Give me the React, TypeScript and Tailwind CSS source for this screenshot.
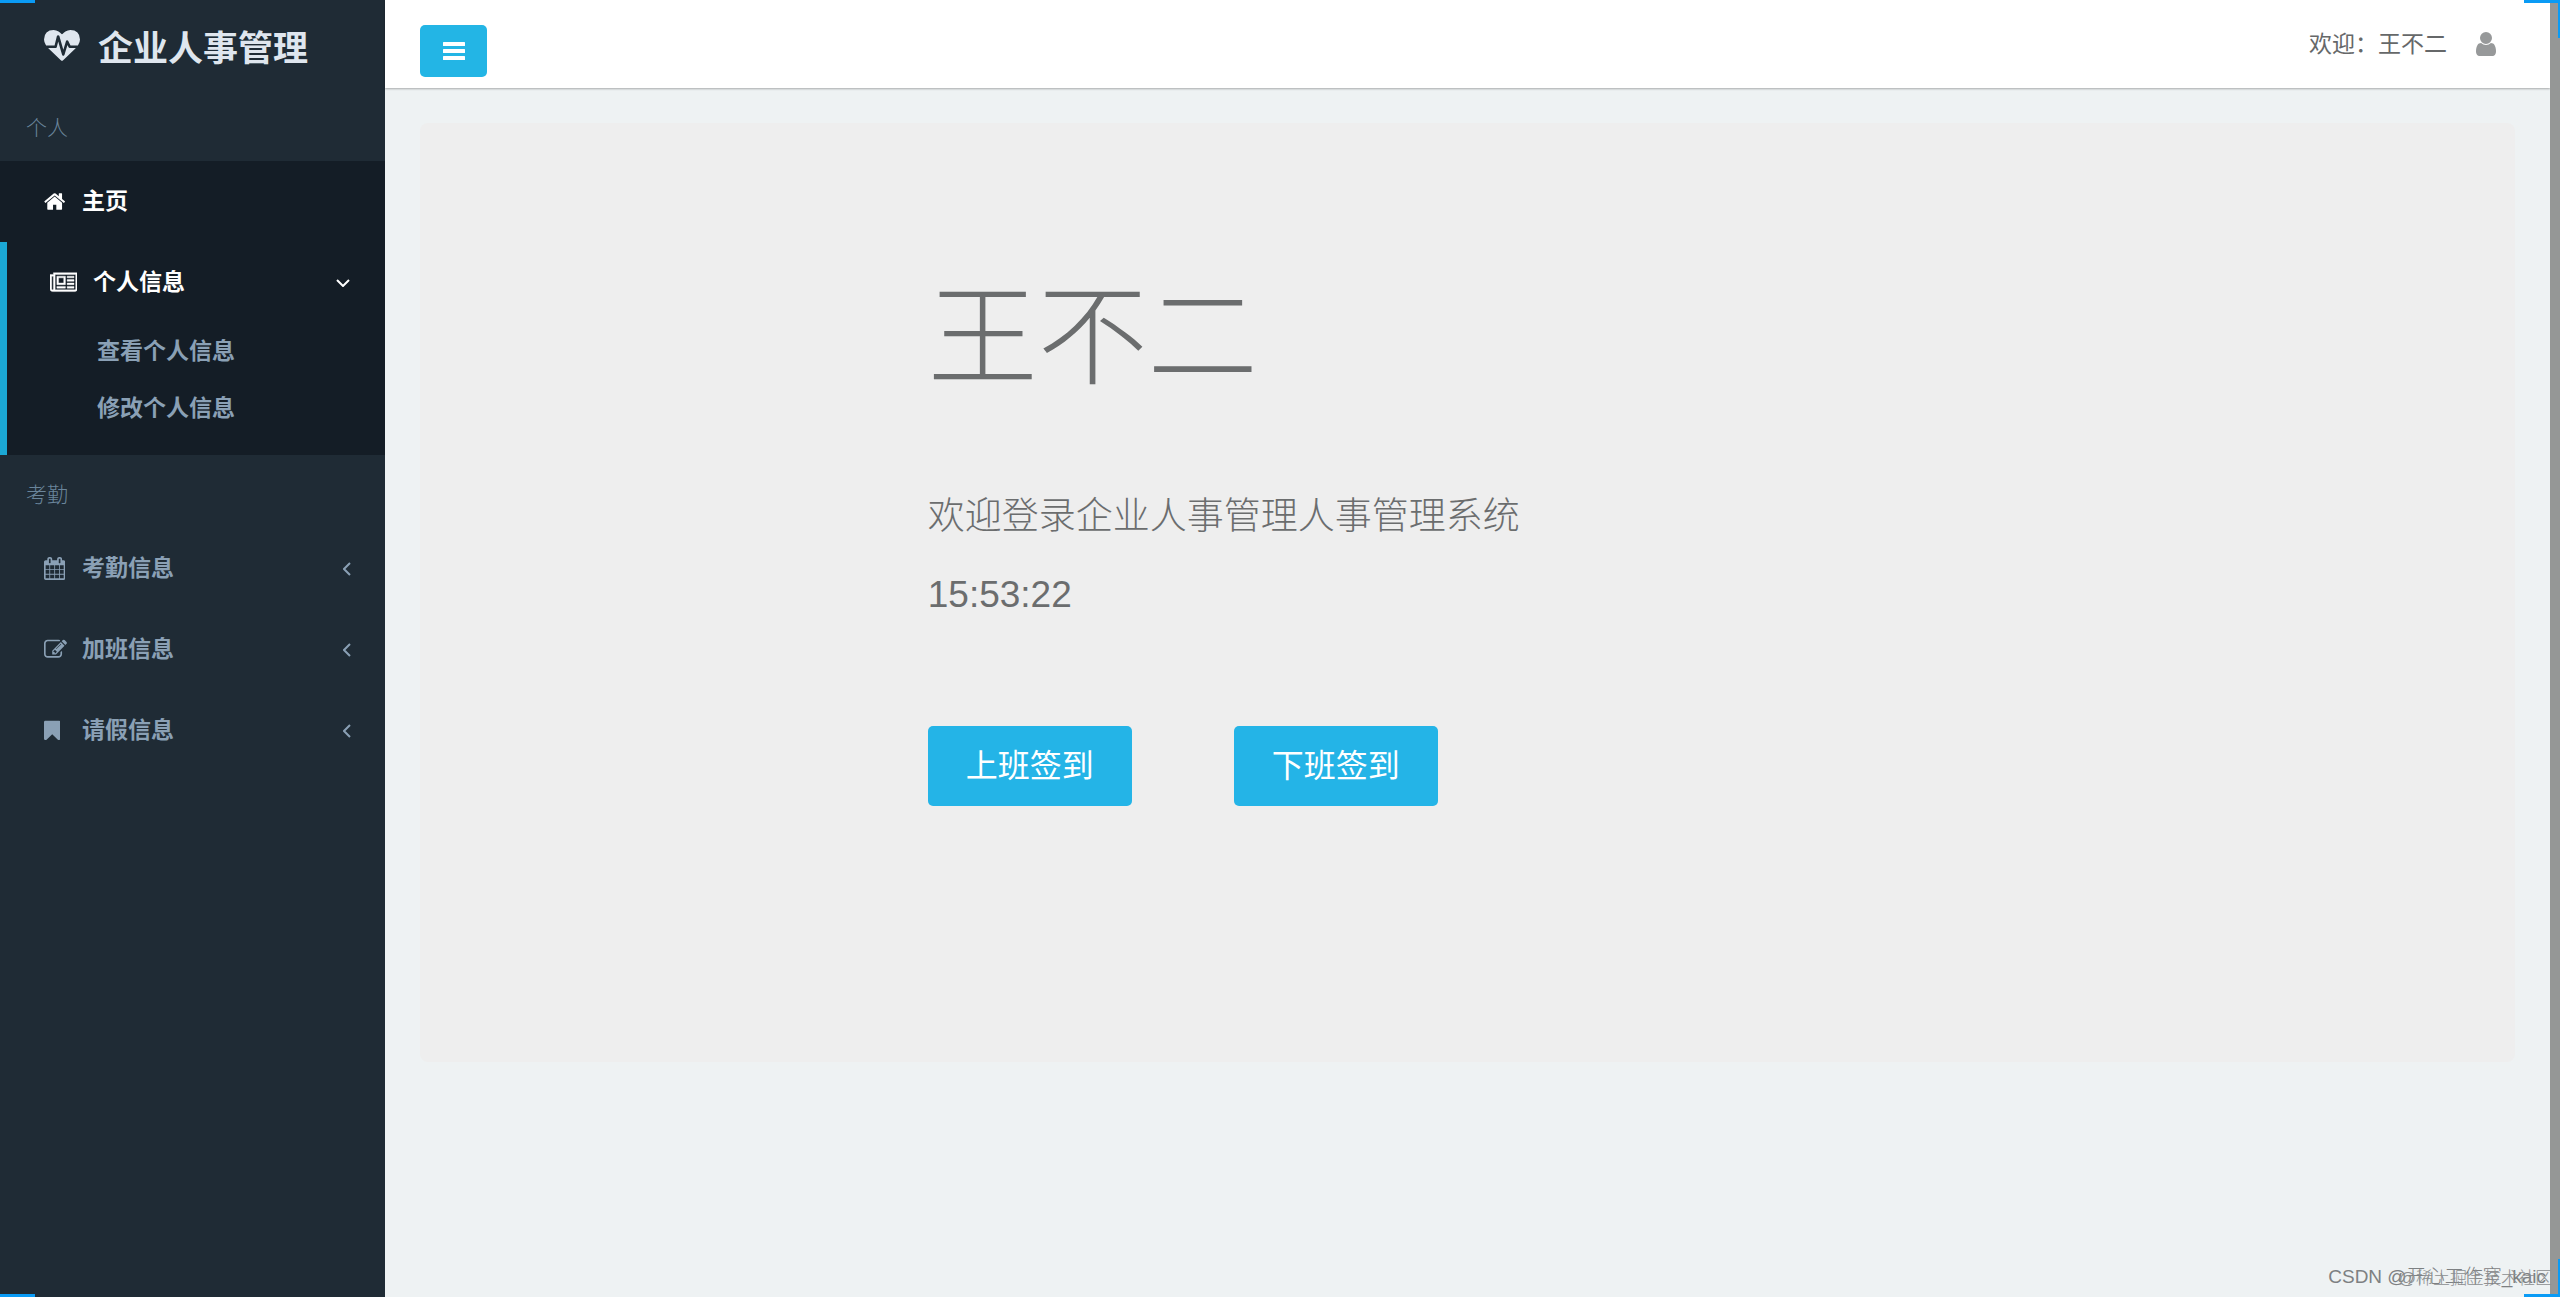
import React from "react";

type IconProps = { className?: string };

const HeartbeatIcon = ({ className }: IconProps) => (
  <svg viewBox="0 0 1792 1792" fill="currentColor" className={className} aria-hidden="true">
    <path d="M1280 896h305q-5 6-10 10.5t-9 7.5l-3 4-623 600q-18 18-44 18t-44-18l-624-602q-5-2-21-20h369q22 0 39.5-13.5t22.5-34.5l70-281 190 667q6 20 23 33t39 13q21 0 38-13t23-33l146-485 56 112q18 35 57 35zm512-428q0 145-103 300h-369l-111-221q-8-17-25.5-27t-36.5-8q-45 5-56 46l-129 430-196-686q-6-20-23.5-33t-39.5-13-39 13.5-22 34.5l-116 464h-423q-103-155-103-300 0-220 127-344t351-124q62 0 126.5 21.5t120 58 95.5 68.5 76 68q36-36 76-68t95.5-68.5 120-58 126.5-21.5q224 0 351 124t127 344z" />
  </svg>
);

const HomeIcon = ({ className }: IconProps) => (
  <svg viewBox="0 0 1664 1792" fill="currentColor" className={className} aria-hidden="true">
    <path d="M1408 992v480q0 26-19 45t-45 19h-384v-384h-256v384h-384q-26 0-45-19t-19-45v-480q0-1 .5-3t.5-3l575-474 575 474q1 2 1 6zm223-69l-62 74q-8 9-21 11h-3q-13 0-21-7l-692-577-692 577q-12 8-24 7-13-2-21-11l-62-74q-8-10-7-23.5t11-21.5l719-599q32-26 76-26t76 26l244 204v-195q0-14 9-23t23-9h192q14 0 23 9t9 23v408l219 182q10 8 11 21.5t-7 23.5z" />
  </svg>
);

const NewspaperIcon = ({ className }: IconProps) => (
  <svg viewBox="0 0 2048 1792" fill="currentColor" className={className} aria-hidden="true">
    <path d="M1024 512h-384v384h384v-384zm128 640v128h-640v-128h640zm0-768v640h-640v-640h640zm640 768v128h-512v-128h512zm0-256v128h-512v-128h512zm0-256v128h-512v-128h512zm0-256v128h-512v-128h512zm-1536 960v-960h-128v960q0 26 19 45t45 19 45-19 19-45zm1664 0v-1088h-1536v1088q0 33-11 64h1483q26 0 45-19t19-45zm128-1216v1216q0 80-56 136t-136 56h-1664q-80 0-136-56t-56-136v-1088h256v-128h1792z" stroke="currentColor" strokeWidth="30" />
  </svg>
);

const CalendarIcon = ({ className }: IconProps) => (
  <svg viewBox="64 0 1664 1792" fill="currentColor" className={className} aria-hidden="true">
    <path d="M192 1664h288v-288h-288v288zm352 0h320v-288h-320v288zm-352-352h288v-320h-288v320zm352 0h320v-320h-320v320zm-352-384h288v-288h-288v288zm736 736h320v-288h-320v288zm-384-736h320v-288h-320v288zm768 736h288v-288h-288v288zm-384-352h320v-320h-320v320zm-352-864v-288q0-13-9.5-22.5t-22.5-9.5h-64q-13 0-22.5 9.5t-9.5 22.5v288q0 13 9.5 22.5t22.5 9.5h64q13 0 22.5-9.5t9.5-22.5zm736 864h288v-320h-288v320zm-384-384h320v-288h-320v288zm384 0h288v-288h-288v288zm32-480v-288q0-13-9.5-22.5t-22.5-9.5h-64q-13 0-22.5 9.5t-9.5 22.5v288q0 13 9.5 22.5t22.5 9.5h64q13 0 22.5-9.5t9.5-22.5zm384-64v1280q0 52-38 90t-90 38h-1408q-52 0-90-38t-38-90v-1280q0-52 38-90t90-38h128v-96q0-66 47-113t113-47h64q66 0 113 47t47 113v96h384v-96q0-66 47-113t113-47h64q66 0 113 47t47 113v96h128q52 0 90 38t38 90z" />
  </svg>
);

const EditIcon = ({ className }: IconProps) => (
  <svg viewBox="0 0 1792 1792" fill="currentColor" className={className} aria-hidden="true">
    <path d="M888 1184l116-116-152-152-116 116v56h96v96h56zm440-720q-16-16-33 1l-350 350q-17 17-1 33t33-1l350-350q17-17 1-33zm80 594v190q0 119-84.5 203.5t-203.5 84.5h-832q-119 0-203.5-84.5t-84.5-203.5v-832q0-119 84.5-203.5t203.5-84.5h832q63 0 117 25 15 7 18 23 3 17-9 29l-49 49q-14 14-32 8-23-6-45-6h-832q-66 0-113 47t-47 113v832q0 66 47 113t113 47h832q66 0 113-47t47-113v-126q0-13 9-22l64-64q15-15 35-7t20 29zm-96-738l288 288-672 672h-288v-288zm444 132l-92 92-288-288 92-92q28-28 68-28t68 28l152 152q28 28 28 68t-28 68z" />
  </svg>
);

const BookmarkIcon = ({ className }: IconProps) => (
  <svg viewBox="256 0 1280 1792" fill="currentColor" className={className} aria-hidden="true">
    <path d="M1420 128q23 0 44 9 33 13 52.5 41t19.5 62v1289q0 34-19.5 62t-52.5 41q-19 8-44 8-48 0-83-32l-441-424-441 424q-36 33-83 33-23 0-44-9-33-13-52.5-41t-19.5-62v-1289q0-34 19.5-62t52.5-41q21-9 44-9h1048z" />
  </svg>
);

const UserIcon = ({ className }: IconProps) => (
  <svg viewBox="256 0 1280 1792" fill="currentColor" className={className} aria-hidden="true">
    <path d="M1536 1399q0 109-62.5 187t-150.5 78h-854q-88 0-150.5-78t-62.5-187q0-85 8.5-160.5t31.5-152 58.5-131 94-89 134.5-34.5q131 128 313 128t313-128q76 0 134.5 34.5t94 89 58.5 131 31.5 152 8.5 160.5zm-256-887q0 159-112.5 271.5t-271.5 112.5-271.5-112.5-112.5-271.5 112.5-271.5 271.5-112.5 271.5 112.5 112.5 271.5z" />
  </svg>
);

const BarsIcon = ({ className }: IconProps) => (
  <svg viewBox="0 0 22 18" fill="currentColor" className={className} aria-hidden="true">
    <rect width="22" height="4" rx="0.5" />
    <rect y="7" width="22" height="4" rx="0.5" />
    <rect y="14" width="22" height="4" rx="0.5" />
  </svg>
);

const AngleLeft = () => (
  <svg viewBox="0 0 8 14" className="w-2 h-[14px]" fill="none" stroke="currentColor" strokeWidth="2" aria-hidden="true">
    <path d="M7 1L1 7l6 6" />
  </svg>
);

const AngleDown = () => (
  <svg viewBox="0 0 14 8" className="w-[14px] h-2" fill="none" stroke="currentColor" strokeWidth="2" aria-hidden="true">
    <path d="M1 1l6 6 6-6" />
  </svg>
);

const SectionLabel = ({ children }: { children: React.ReactNode }) => (
  <div className="h-[73px] pt-[7px] pl-[26px] flex items-center text-[21px] font-light text-[#6a859b]">
    {children}
  </div>
);

const attendance = [
  { label: "考勤信息", icon: <CalendarIcon className="h-[23px]" /> },
  { label: "加班信息", icon: <EditIcon className="h-[23px]" /> },
  { label: "请假信息", icon: <BookmarkIcon className="h-[23px]" /> },
];

const Sidebar = () => {
  return (
    <aside className="w-[385px] shrink-0 bg-[#1f2b35] text-[#8aa0b5]">
      <div className="h-[88px] pt-2 pl-11 flex items-center gap-[18px] text-[#dfe6ee]">
        <HeartbeatIcon className="w-9 h-9" />
        <h1 className="pt-[2px] text-[35px] leading-10 font-bold">企业人事管理</h1>
      </div>

      <nav className="text-[23px] font-bold">
        <SectionLabel>个人</SectionLabel>
        <a href="#" className="h-[81px] pl-11 flex items-center bg-[#141d26] text-white">
          <span className="w-[38px]">
            <HomeIcon className="h-[23px]" />
          </span>
          主页
        </a>
        <div className="bg-[#141d26] border-l-[7px] border-[#1ba8d5] pb-[18px]">
          <button className="w-full h-[81px] pl-[43px] pr-[35px] flex items-center text-white">
            <span className="w-[43px]">
              <NewspaperIcon className="h-6" />
            </span>
            个人信息
            <span className="ml-auto">
              <AngleDown />
            </span>
          </button>
          <a href="#" className="h-[57px] pl-[90px] flex items-center">
            查看个人信息
          </a>
          <a href="#" className="h-[57px] pl-[90px] flex items-center">
            修改个人信息
          </a>
        </div>

        <SectionLabel>考勤</SectionLabel>
        {attendance.map((item) => (
          <button key={item.label} className="w-full h-[81px] pl-11 pr-[34px] flex items-center">
            <span className="w-[38px]">{item.icon}</span>
            {item.label}
            <span className="ml-auto">
              <AngleLeft />
            </span>
          </button>
        ))}
      </nav>
    </aside>
  );
};

const Header = () => {
  return (
    <header className="h-[88px] pl-[35px] pr-[54px] flex items-center justify-between bg-white shadow-[0_1px_2px_rgba(0,0,0,0.3)]">
      <button
        aria-label="菜单"
        className="w-[67px] h-[52px] mt-[14px] flex items-center justify-center rounded-[5px] bg-[#23b5e5] text-white"
      >
        <BarsIcon className="w-[22px]" />
      </button>
      <div className="flex items-center gap-[29px] text-[23px] text-[#666869]">
        <span>欢迎：王不二</span>
        <UserIcon className="w-5 text-[#97999a]" />
      </div>
    </header>
  );
};

const ClockButton = ({ children }: { children: React.ReactNode }) => (
  <button className="h-20 px-[38px] rounded-[5px] bg-[#24b4e7] text-[32px] text-white">
    {children}
  </button>
);

const App = () => {
  return (
    <div className="relative min-h-screen flex overflow-hidden bg-[#eef2f3] font-['Liberation_Sans','Noto_Sans_CJK_SC',sans-serif]">
      <Sidebar />
      <div className="flex-1 min-w-0">
        <Header />
        <main className="p-[35px]">
          <section className="rounded-lg bg-[#eeeeee] pt-[155px] pb-64 text-[#6b6d6e]">
            <div className="-mx-8 grid grid-cols-4">
              <div className="col-start-2 col-span-3">
                <h2 className="text-[110px] leading-[120px] font-light">王不二</h2>
                <p className="mt-[99px] text-[37px] leading-10 font-light">
                  欢迎登录企业人事管理人事管理系统
                </p>
                <p className="mt-[38px] text-[37px] leading-10">15:53:22</p>
                <div className="mt-[111px] flex gap-[102px]">
                  <ClockButton>上班签到</ClockButton>
                  <ClockButton>下班签到</ClockButton>
                </div>
              </div>
            </div>
          </section>
        </main>
      </div>
      <div className="w-[10px] shrink-0 bg-[#959796]"></div>

      {/* frame corners */}
      <div className="absolute left-0 top-0 w-[35px] h-[3px] bg-[#0a9bf5]"></div>
      <div className="absolute left-0 bottom-0 w-[35px] h-[3px] bg-[#0a9bf5]"></div>
      <div className="absolute right-0 top-0 w-9 h-[38px] border-t-[3px] border-r-2 border-[#0a9bf5]"></div>
      <div className="absolute right-0 bottom-0 w-9 h-[38px] border-b-[3px] border-r-2 border-[#0a9bf5]"></div>

      {/* watermarks */}
      <div className="absolute right-[14px] bottom-2 text-[19px] leading-6 font-light text-[#7d8082]">
        CSDN @开心工作室_kaic
      </div>
      <div className="absolute right-2 bottom-[6px] text-[17px] leading-6 font-light text-[#8c8f91]">
        @稀土掘金技术社区
      </div>
    </div>
  );
};

export default App;
